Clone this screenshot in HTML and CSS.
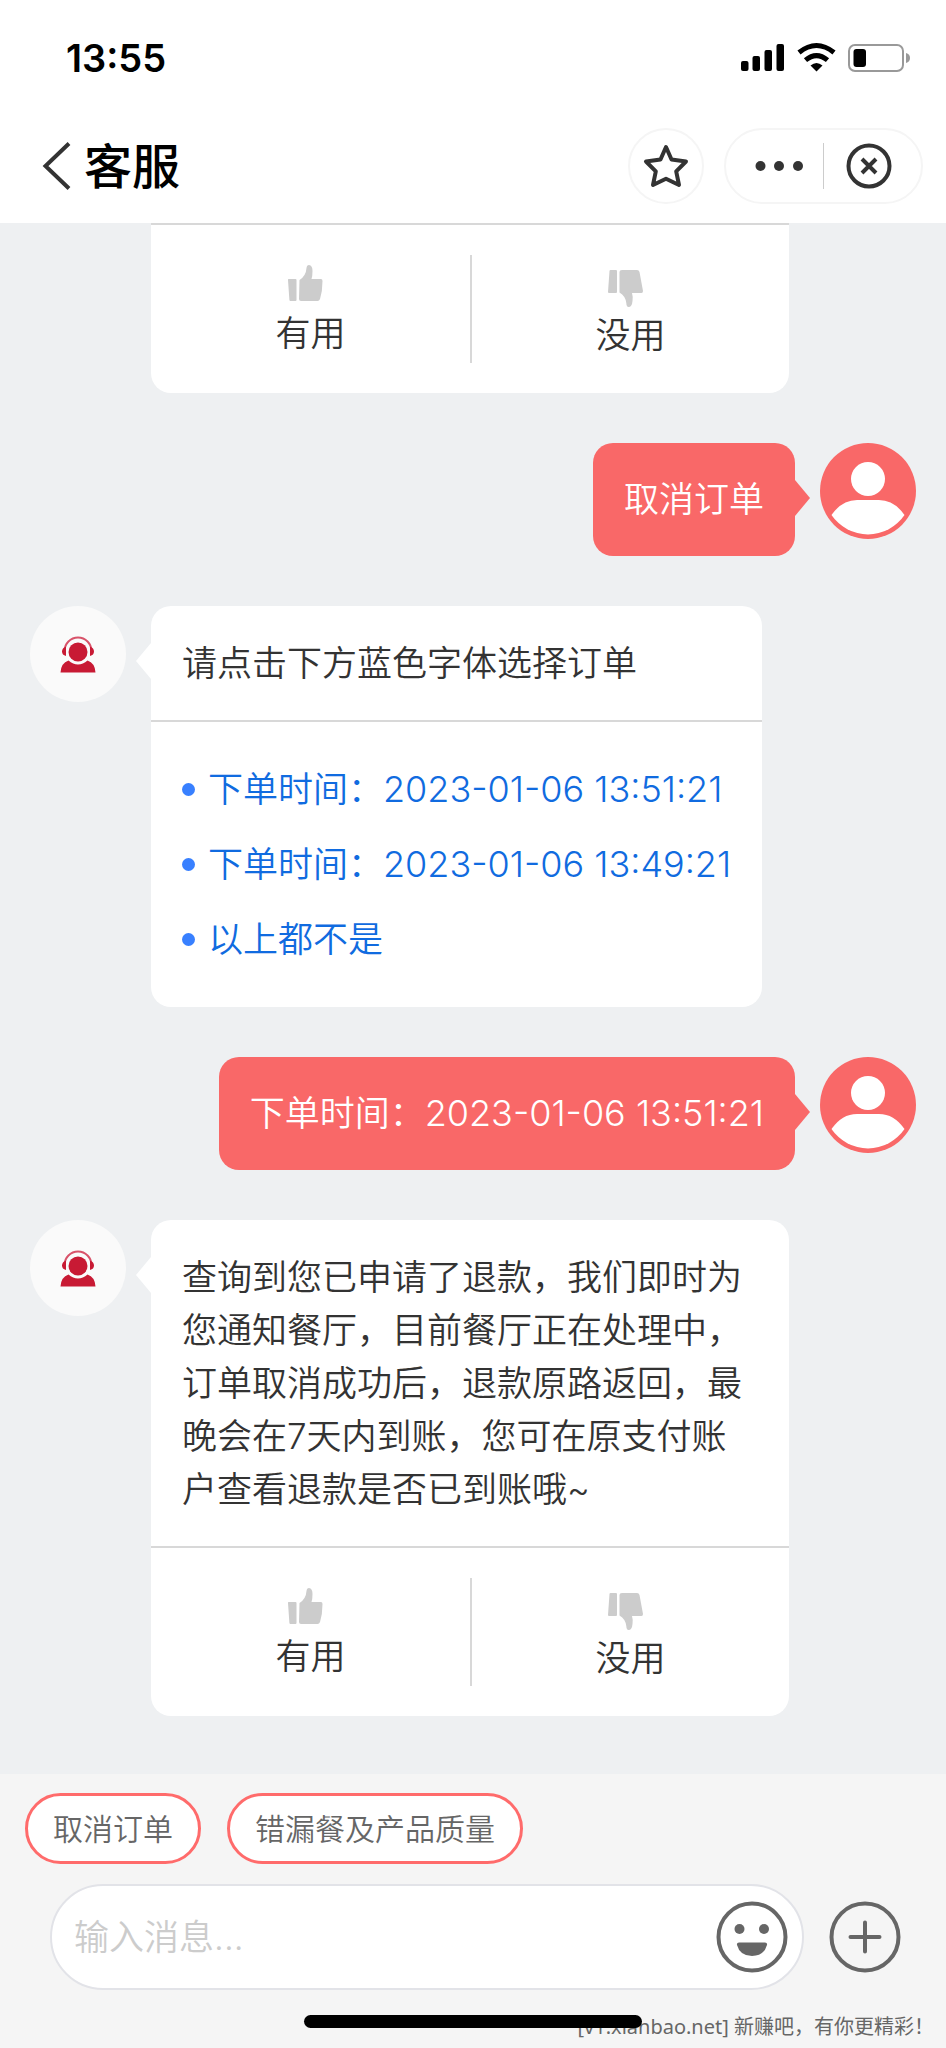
FILE: index.html
```html
<!DOCTYPE html>
<html lang="zh-CN">
<head>
<meta charset="utf-8">
<meta name="viewport" content="width=device-width, initial-scale=1">
<title>客服</title>
<link rel="stylesheet" href="styles.css">
</head>
<body>
<svg class="sprite" aria-hidden="true">
  <symbol id="thumb-up" viewBox="0 0 48 46">
    <path d="M1.500 18H8.500Q9.500 18 9.500 19V39Q9.500 40 8.500 40H3.500Q2.500 40 2.400 39L1 19Q1 18 1.500 18ZM12.500 19Q19 15 19.500 7Q19.800 4 22 4Q25.500 4.500 25.500 10Q25.500 15 24.500 18H34Q35.500 18 35.500 20Q35.500 30 33 38Q32.300 40 30.500 40H14Q12 40 12 38Z"/>
  </symbol>
  <symbol id="thumb-down" viewBox="0 0 48 46">
    <path d="M3.500 7H9Q10 7 10 8V29Q10 30 9 30H2Q1 30 1 29L2.500 8Q2.600 7 3.500 7ZM15 7H30Q32 7 32.500 9L36 28Q36 30 34.500 30H25Q26 33 25.500 38Q25 44 21.500 44Q19.500 44 19.300 40Q18.500 33 12.500 29.500V9Q12.500 7 15 7Z"/>
  </symbol>
  <symbol id="agent" viewBox="0 0 96 96">
    <circle cx="48" cy="46" r="9.500" fill="#c81a34"/>
    <path d="M34.500 45A13.500 13.500 0 0 1 61.500 45" fill="none" stroke="#d8536a" stroke-width="2"/>
    <path d="M36 40.500V50Q32 49 32 45.500Q32 42 36 40.500ZM60 40.500V50Q64 49 64 45.500Q64 42 60 40.500ZM38.500 54.500Q43 58.500 48 58.500Q53 58.500 57.500 54.500Q65 57 65.500 66.500H30.500Q31 57 38.500 54.500Z" fill="#c81a34"/>
  </symbol>
  <symbol id="user" viewBox="0 0 96 96">
    <circle cx="48" cy="36" r="17"/>
    <path d="M11.500 72Q22 57 37 57H59Q74 57 84.500 72A44 44 0 0 1 11.500 72Z"/>
  </symbol>
</svg>

<div class="page">
  <header class="top">
    <div class="status">
      <time class="status-time">13:55</time>
      <svg class="status-icons" viewBox="0 0 170 32" aria-hidden="true">
        <rect x="1" y="19" width="7.500" height="10" rx="2"/>
        <rect x="12.500" y="14" width="7.500" height="15" rx="2"/>
        <rect x="24.500" y="8" width="7.500" height="21" rx="2"/>
        <rect x="36.500" y="2" width="7.500" height="27" rx="2"/>
        <g fill="none" stroke="#000" stroke-width="5">
          <path d="M59 10.500Q76.500-3.500 94 10.500"/>
          <path d="M65.500 18.200Q76.500 9 87.500 18.200"/>
        </g>
        <path d="M70.500 23.500Q76.500 18.500 82.500 23.500L76.500 29.500Z"/>
        <rect x="109" y="3" width="54" height="26" rx="6" fill="none" stroke="#999" stroke-width="2"/>
        <rect x="113.500" y="7" width="12.500" height="18" rx="3"/>
        <path d="M166 11Q170 12 170 16T166 21Z" fill="#999"/>
      </svg>
    </div>
    <nav class="nav">
      <button class="back" type="button" aria-label="返回">
        <svg viewBox="0 0 30 50" aria-hidden="true"><path d="M27 2.500L3.500 25L27 47.500"/></svg>
      </button>
      <h1 class="title">客服</h1>
      <button class="star" type="button" aria-label="收藏">
        <svg viewBox="0 0 46 46" aria-hidden="true"><path d="M23 4L28.500 16.500L43 18.500L33.200 28.300L36 42L23 35.700L10 42L12.800 28.300L3 18.500L17.500 16.500Z"/></svg>
      </button>
      <div class="capsule">
        <button class="capsule-button more" type="button" aria-label="更多">
          <svg viewBox="0 0 48 12" aria-hidden="true"><circle cx="5.500" cy="6" r="5"/><circle cx="24" cy="6" r="5"/><circle cx="43" cy="6" r="5"/></svg>
        </button>
        <button class="capsule-button close" type="button" aria-label="关闭">
          <svg viewBox="0 0 46 46" aria-hidden="true"><circle cx="23" cy="23" r="20.500"/><path d="M16 16L30 30M30 16L16 30"/></svg>
        </button>
      </div>
    </nav>
  </header>

  <main class="chat">
    <div class="row row-bot">
      <div class="card card-wide card-continued">
        <div class="feedback">
          <button class="vote" type="button"><svg aria-hidden="true"><use href="#thumb-up"/></svg>有用</button>
          <button class="vote" type="button"><svg aria-hidden="true"><use href="#thumb-down"/></svg>没用</button>
        </div>
      </div>
    </div>

    <div class="row row-user">
      <p class="bubble">取消订单</p>
      <svg class="avatar avatar-user" role="img" aria-label="用户"><use href="#user"/></svg>
    </div>

    <div class="row row-bot">
      <svg class="avatar avatar-bot" role="img" aria-label="客服"><use href="#agent"/></svg>
      <div class="card card-tail">
        <p class="text">请点击下方蓝色字体选择订单</p>
        <ul class="orders">
          <li><a href="#order-1">下单时间：<time class="date">2023-01-06 13:51:21</time></a></li>
          <li><a href="#order-2">下单时间：<time class="date">2023-01-06 13:49:21</time></a></li>
          <li><a href="#none">以上都不是</a></li>
        </ul>
      </div>
    </div>

    <div class="row row-user">
      <p class="bubble">下单时间：<time class="date">2023-01-06 13:51:21</time></p>
      <svg class="avatar avatar-user" role="img" aria-label="用户"><use href="#user"/></svg>
    </div>

    <div class="row row-bot">
      <svg class="avatar avatar-bot" role="img" aria-label="客服"><use href="#agent"/></svg>
      <div class="card card-wide card-tail">
        <p class="text">查询到您已申请了退款，我们即时为您通知餐厅，目前餐厅正在处理中，订单取消成功后，退款原路返回，最晚会在7天内到账，您可在原支付账户查看退款是否已到账哦~</p>
        <div class="feedback">
          <button class="vote" type="button"><svg aria-hidden="true"><use href="#thumb-up"/></svg>有用</button>
          <button class="vote" type="button"><svg aria-hidden="true"><use href="#thumb-down"/></svg>没用</button>
        </div>
      </div>
    </div>
  </main>

  <footer class="bottom">
    <div class="chips">
      <button class="chip" type="button">取消订单</button>
      <button class="chip" type="button">错漏餐及产品质量</button>
    </div>
    <form class="composer">
      <div class="field">
        <input class="input" type="text" placeholder="输入消息..." aria-label="输入消息">
        <button class="round" type="button" aria-label="表情">
          <svg viewBox="0 0 72 72" aria-hidden="true">
            <circle class="line" cx="36" cy="36" r="33.500"/>
            <circle cx="23.500" cy="28" r="5"/><circle cx="48" cy="28" r="5"/>
            <path d="M23 41.500H49Q51.500 41.500 51 44Q48 55 36 55T21 44Q20.500 41.500 23 41.500Z"/>
          </svg>
        </button>
      </div>
      <button class="round" type="button" aria-label="更多功能">
        <svg viewBox="0 0 72 72" aria-hidden="true">
          <circle class="line" cx="36" cy="36" r="33.500"/>
          <path class="line" d="M36 21.500V50.500M21.500 36H50.500"/>
        </svg>
      </button>
    </form>
    <div class="home-area">
      <div class="home-indicator"></div>
      <p class="watermark">[v1.xianbao.net] 新赚吧，有你更精彩！</p>
    </div>
  </footer>
</div>
</body>
</html>
```

FILE: styles.css
```css
* {
  box-sizing: border-box;
}

body,
h1,
p,
ul {
  margin: 0;
  padding: 0;
}

body {
  font-family: Inter, "Noto Sans CJK SC", sans-serif;
  font-size: 35px;
  font-weight: 350;
  line-height: 53px;
  color: #333;
  background: #eef0f2;
}

button {
  margin: 0;
  padding: 0;
  border: 0;
  background: none;
  font: inherit;
  color: inherit;
}

svg {
  display: block;
  flex: none;
}

.sprite {
  position: absolute;
  width: 0;
  height: 0;
}

.page {
  display: flex;
  flex-direction: column;
  min-height: 100vh;
}

/* Status bar and navigation */

.top {
  background: #fff;
  padding-bottom: 19px;
}

.status {
  display: flex;
  align-items: center;
  justify-content: space-between;
  height: 116px;
  padding: 0 36px 0 66px;
}

.status-time {
  font-size: 38px;
  font-weight: 600;
  color: #000;
}

.status-icons {
  width: 170px;
  height: 32px;
}

.nav {
  display: flex;
  align-items: center;
  height: 76px;
  margin-top: 12px;
  padding: 0 23px 0 42px;
}

.back svg {
  width: 30px;
  height: 50px;
  fill: none;
  stroke: #333;
  stroke-width: 4;
}

.title {
  flex: 1;
  margin-left: 12px;
  font-size: 48px;
  font-weight: 500;
  color: #000;
}

.star,
.capsule {
  display: flex;
  align-items: center;
  justify-content: center;
  height: 76px;
  border: 2px solid #f5f5f5;
  border-radius: 38px;
}

.star {
  width: 76px;
  margin-right: 20px;
}

.star svg,
.close svg {
  width: 46px;
  height: 46px;
  fill: none;
  stroke: #333;
  stroke-width: 4;
  stroke-linejoin: round;
}

.capsule {
  width: 199px;
}

.capsule-button {
  display: flex;
  align-items: center;
  height: 46px;
}

.more {
  padding-right: 20px;
  border-right: 1px solid #ccc;
}

.more svg {
  width: 48px;
  height: 12px;
  fill: #333;
}

.close {
  padding-left: 22px;
}

/* Conversation */

.chat {
  display: flex;
  flex: 1;
  flex-direction: column;
  gap: 50px;
  padding-bottom: 57px;
}

.row {
  display: flex;
  align-items: flex-start;
}

.row-bot {
  gap: 25px;
  padding: 0 157px 0 30px;
}

.row-user {
  justify-content: flex-end;
  gap: 25px;
  padding: 0 30px;
}

.avatar {
  width: 96px;
  height: 96px;
  border-radius: 50%;
}

.avatar-bot {
  background: #fafafa;
}

.avatar-user {
  background: #f96868;
  fill: #fff;
}

.card {
  position: relative;
  border-radius: 20px;
  background: #fff;
}

.card-wide {
  flex: 1;
}

.card-continued {
  margin-left: 121px;
  border-radius: 0 0 20px 20px;
}

.card-tail::before,
.bubble::after {
  content: "";
  position: absolute;
  top: 37px;
  border: solid transparent;
}

.card-tail::before {
  right: 100%;
  border-width: 18px 15px 18px 0;
  border-right-color: #fff;
}

.text {
  padding: 31px 31px 30px;
}

.bubble {
  position: relative;
  padding: 30px 31px;
  border-radius: 20px;
  background: #f96868;
  color: #fff;
}

.bubble::after {
  left: 100%;
  border-width: 18px 0 18px 15px;
  border-left-color: #f96868;
}

.date {
  font-size: 36px;
}

.orders {
  display: flex;
  flex-direction: column;
  gap: 22px;
  padding: 41px 31px;
  border-top: 2px solid #d8d8d8;
  list-style: none;
}

.orders li {
  display: flex;
  align-items: center;
  gap: 13px;
}

.orders li::before {
  content: "";
  width: 13px;
  height: 13px;
  border-radius: 50%;
  background: #3880ff;
}

.orders a {
  color: #106be0;
  text-decoration: none;
}

.feedback {
  display: grid;
  grid-template-columns: 1fr 1fr;
  padding: 30px 0;
  border-top: 2px solid #d8d8d8;
}

.vote {
  display: flex;
  flex-direction: column;
  align-items: center;
  height: 108px;
  padding-top: 6px;
}

.vote + .vote {
  padding-top: 8px;
  border-left: 2px solid #d8d8d8;
}

.vote svg {
  width: 48px;
  height: 46px;
  fill: #ccc;
}

/* Quick replies and message box */

.bottom {
  padding-top: 19px;
  background: #f5f5f5;
}

.chips {
  display: flex;
  gap: 26px;
  padding: 0 25px;
}

.chip {
  padding: 7px 25px 5px;
  border: 3px solid #ff6b6b;
  border-radius: 36px;
  background: #fff;
  font-size: 30px;
  color: #666;
}

.composer {
  display: flex;
  align-items: center;
  gap: 25px;
  margin-top: 20px;
  padding: 0 45px 0 50px;
}

.field {
  display: flex;
  flex: 1;
  align-items: center;
  height: 106px;
  padding: 0 14px 0 22px;
  border: 2px solid #e2e3e8;
  border-radius: 53px;
  background: #fff;
}

.input {
  flex: 1;
  min-width: 0;
  height: 53px;
  padding: 0;
  border: 0;
  outline: 0;
  background: none;
  font: inherit;
  color: #333;
}

.input::placeholder {
  color: #ccc;
}

.round svg {
  width: 72px;
  height: 72px;
  fill: #666;
}

.round .line {
  fill: none;
  stroke: #666;
  stroke-width: 4;
  stroke-linecap: round;
}

.home-area {
  position: relative;
  height: 58px;
  padding-top: 25px;
}

.home-indicator {
  position: relative;
  z-index: 1;
  width: 338px;
  height: 13px;
  margin: 0 auto;
  border-radius: 7px;
  background: #000;
}

.watermark {
  position: absolute;
  right: 12px;
  bottom: 6px;
  font-family: "Noto Sans", "Noto Sans CJK SC", sans-serif;
  font-size: 20px;
  font-weight: 400;
  line-height: 30px;
  color: #666;
}
```
